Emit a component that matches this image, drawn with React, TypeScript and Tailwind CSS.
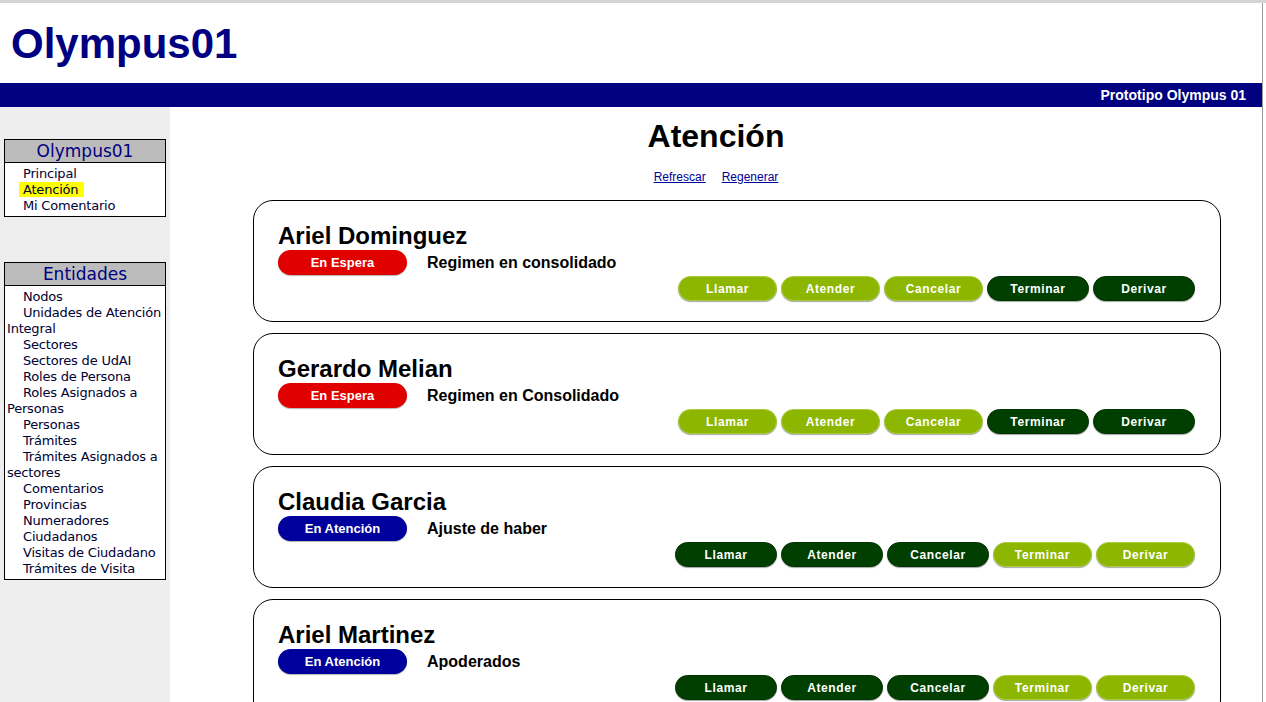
import React from "react";

type Turno = {
  nombre: string;
  estado: "espera" | "atencion";
  tramite: string;
};

const turnos: Turno[] = [
  { nombre: "Ariel Dominguez", estado: "espera", tramite: "Regimen en consolidado" },
  { nombre: "Gerardo Melian", estado: "espera", tramite: "Regimen en Consolidado" },
  { nombre: "Claudia Garcia", estado: "atencion", tramite: "Ajuste de haber" },
  { nombre: "Ariel Martinez", estado: "atencion", tramite: "Apoderados" },
];

const menuPrincipal = ["Principal", "Atención", "Mi Comentario"];

const entidades = [
  "Nodos",
  "Unidades de Atención Integral",
  "Sectores",
  "Sectores de UdAI",
  "Roles de Persona",
  "Roles Asignados a Personas",
  "Personas",
  "Trámites",
  "Trámites Asignados a sectores",
  "Comentarios",
  "Provincias",
  "Numeradores",
  "Ciudadanos",
  "Visitas de Ciudadano",
  "Trámites de Visita",
];

function MenuBox({ title, items, active }: { title: string; items: string[]; active?: string }) {
  return (
    <div className="border border-black bg-white">
      <div className="h-[23px] border-b border-black bg-[#bcbcbc] text-center text-[17px] leading-[22px] text-[#000080]">
        {title}
      </div>
      <ul className="pt-[3px] pb-[2px] pl-[2px] text-[13px] leading-[16px] tracking-[-0.2px] text-[#000033]">
        {items.map((item) => (
          <li key={item} className="indent-[16px]">
            <span className={item === active ? "bg-[#ffff00] pl-[4px] pr-[6px] -ml-[4px]" : ""}>{item}</span>
          </li>
        ))}
      </ul>
    </div>
  );
}

function ActionButton({ label, dark }: { label: string; dark: boolean }) {
  return (
    <button
      className={`h-[25px] rounded-full text-[12px] font-bold tracking-[0.6px] text-white shadow-[0_1px_1px_rgba(0,0,0,0.35)] ${
        dark ? "w-[102px] bg-[#003f00] border border-[#003300]" : "w-[99px] bg-[#8db600] border border-[#a9cd3c]"
      }`}
    >
      {label}
    </button>
  );
}

function TurnoCard({ turno }: { turno: Turno }) {
  const enAtencion = turno.estado === "atencion";
  const botones = ["Llamar", "Atender", "Cancelar", "Terminar", "Derivar"];
  return (
    <div className="rounded-[20px] border border-black bg-white pl-[24px] pr-[25px] pt-[21px] pb-[20px]">
      <div className="h-[28px] text-[24px] font-bold leading-[28px] text-black">{turno.nombre}</div>
      <div className="flex h-[25px] items-center">
        <div
          className={`flex h-[25px] w-[129px] items-center justify-center rounded-full text-[13px] font-bold text-white shadow-[0_1px_1px_rgba(0,0,0,0.3)] ${
            enAtencion ? "bg-[#00009c]" : "bg-[#e00000]"
          }`}
        >
          {enAtencion ? "En Atención" : "En Espera"}
        </div>
        <div className="ml-[20px] text-[16px] font-bold text-black">{turno.tramite}</div>
      </div>
      <div className="mt-[1px] flex justify-end gap-[4px]">
        {botones.map((b, i) => (
          <ActionButton key={b} label={b} dark={enAtencion ? i < 3 : i >= 3} />
        ))}
      </div>
    </div>
  );
}

export default function App() {
  return (
    <div className="h-[702px] w-[1266px] overflow-hidden bg-white font-['Liberation_Sans',Arial,sans-serif]">
      <div className="h-[3px] bg-[#d4d4d4]" />
      <div className="w-[1263px] border-r border-[#9a9a9a]">
        {/* Header */}
        <div className="h-[80px] pl-[11px] pt-[16px]">
          <h1 className="text-[42px] font-bold leading-[50px] text-[#000080]">Olympus01</h1>
        </div>
        <div className="flex h-[24px] items-center justify-end bg-[#000080] pr-[16px] text-[14px] font-bold text-white">
          Prototipo Olympus 01
        </div>

        <div className="flex">
          {/* Sidebar */}
          <aside className="h-[600px] w-[170px] shrink-0 bg-[#eeeeee] px-[4px] pt-[32px] font-['DejaVu_Sans',Verdana,sans-serif]">
            <MenuBox title="Olympus01" items={menuPrincipal} active="Atención" />
            <div className="h-[45px]" />
            <MenuBox title="Entidades" items={entidades} />
          </aside>

          {/* Main */}
          <main className="flex-1">
            <h2 className="pt-[10px] text-center text-[32px] font-bold leading-[38px] text-black">Atención</h2>
            <div className="mt-[15px] flex justify-center gap-[16px] text-[12px] leading-[14px]">
              <a href="#" className="text-[#000099] underline">Refrescar</a>
              <a href="#" className="text-[#000099] underline">Regenerar</a>
            </div>
            <div className="ml-[83px] mt-[16px] flex w-[968px] flex-col gap-[11px]">
              {turnos.map((t) => (
                <TurnoCard key={t.nombre} turno={t} />
              ))}
            </div>
          </main>
        </div>
      </div>
    </div>
  );
}
